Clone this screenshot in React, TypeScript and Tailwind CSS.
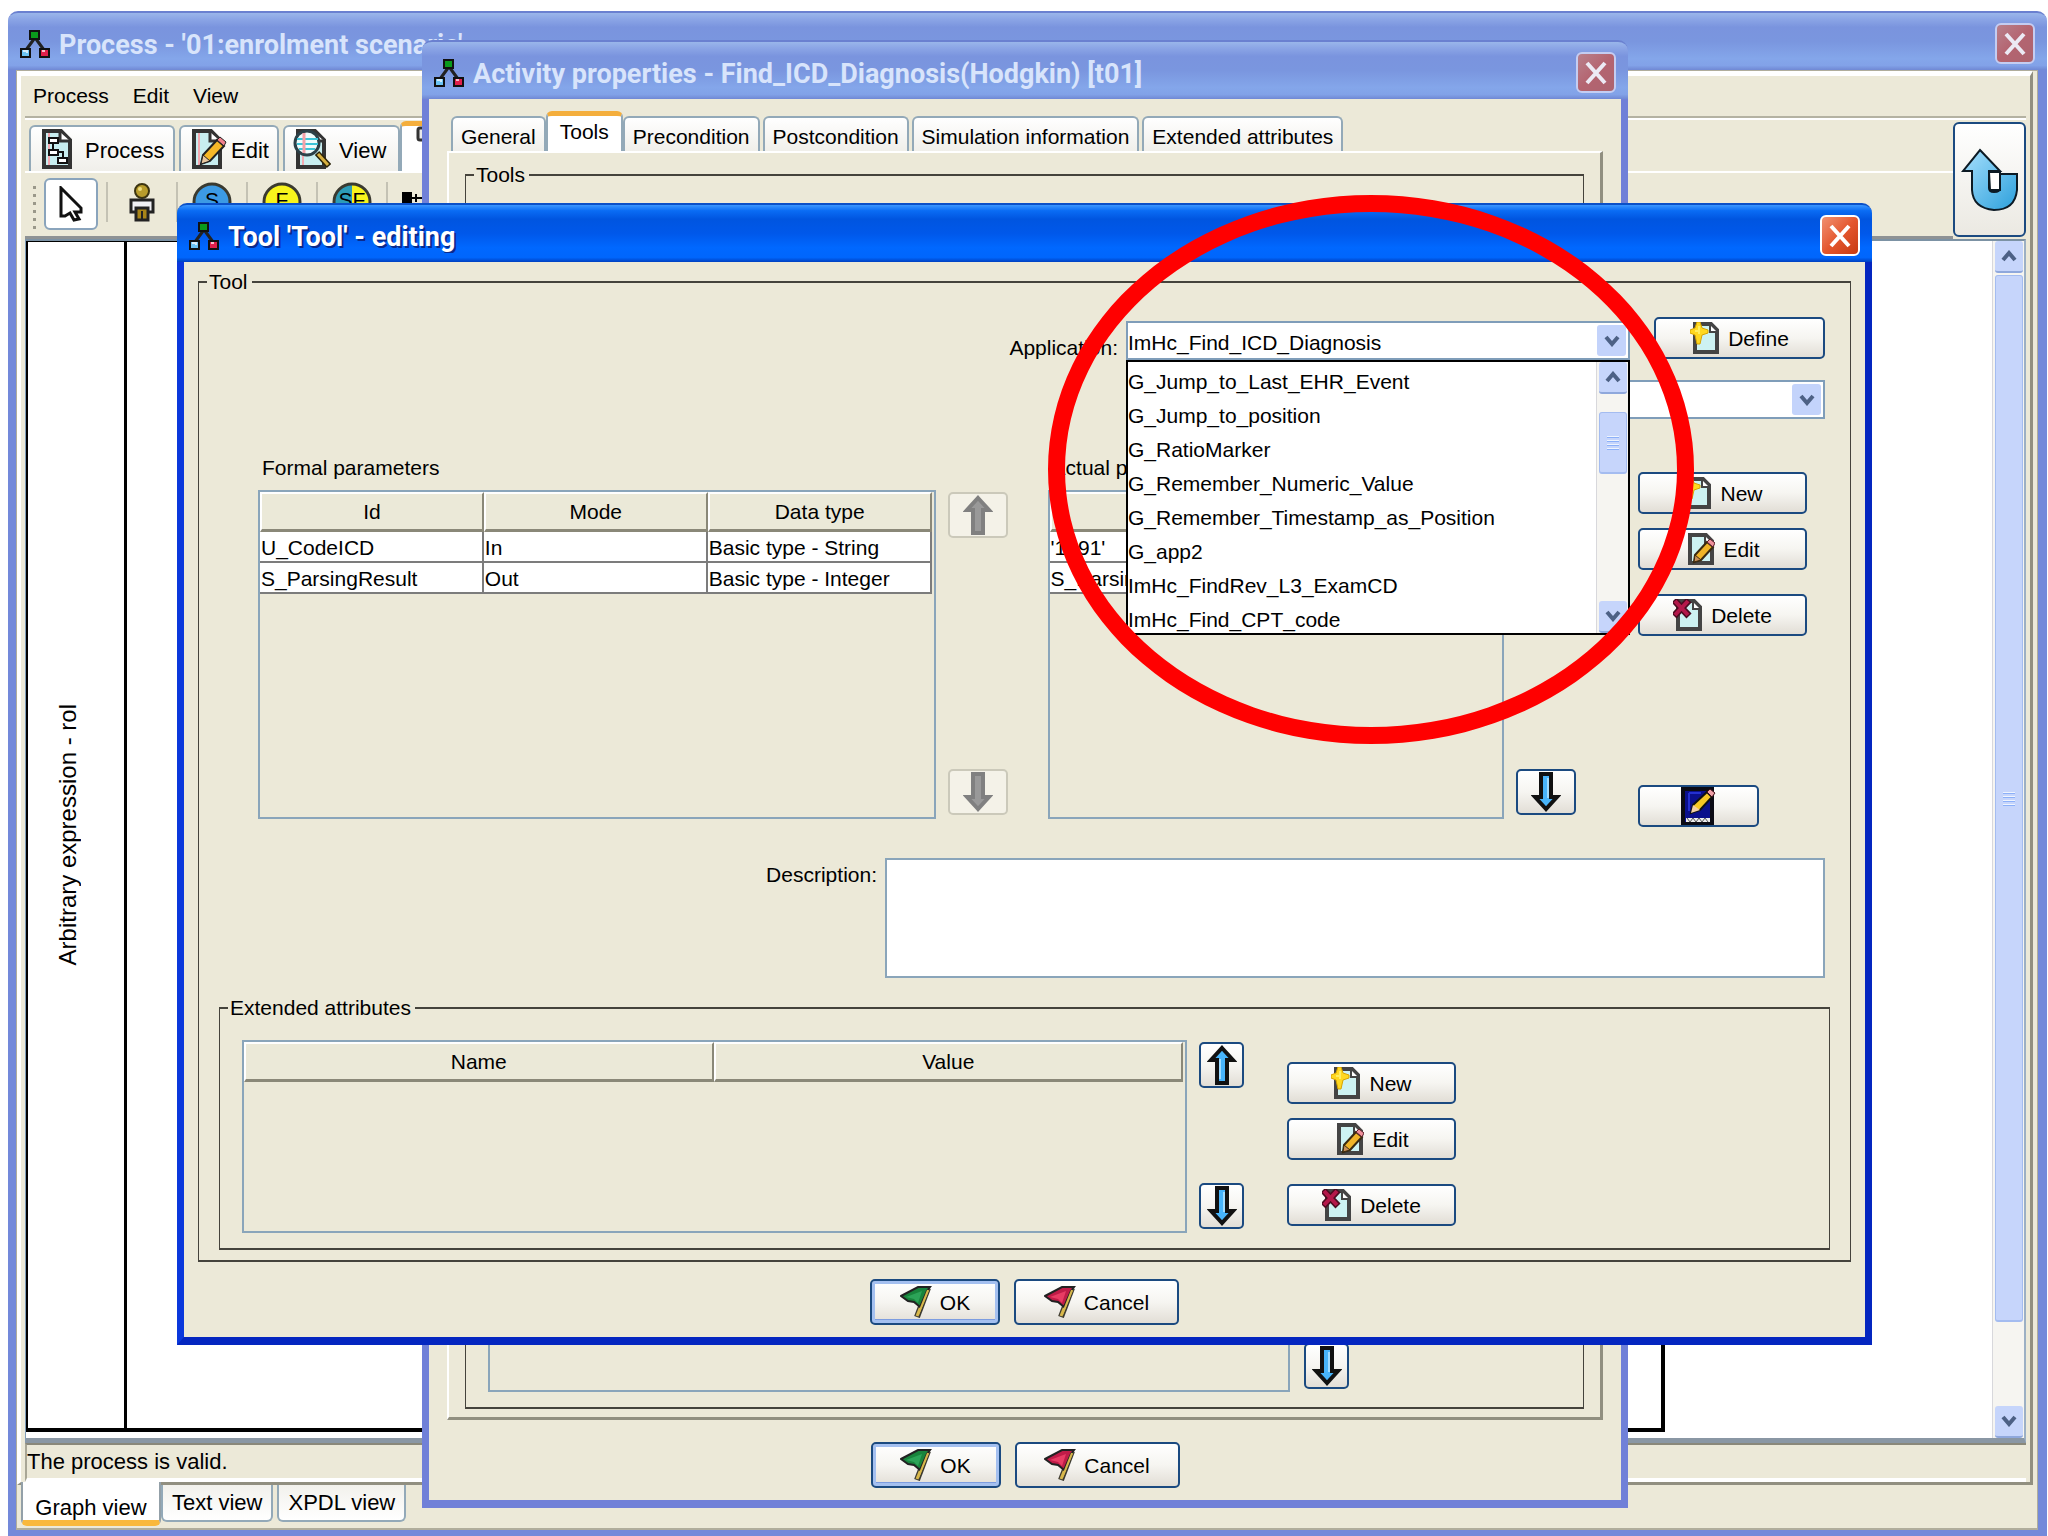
import React, { useState } from 'react';
import clsx from 'clsx';

const applications = [
  'G_Jump_to_Last_EHR_Event',
  'G_Jump_to_position',
  'G_RatioMarker',
  'G_Remember_Numeric_Value',
  'G_Remember_Timestamp_as_Position',
  'G_app2',
  'ImHc_FindRev_L3_ExamCD',
  'ImHc_Find_CPT_code'
];

const formalParameters = [
  { id: 'U_CodeICD', mode: 'In', type: 'Basic type - String' },
  { id: 'S_ParsingResult', mode: 'Out', type: 'Basic type - Integer' }
];

const actualParameters = ["'1291'", 'S_ParsingResult'];

const activityTabs = [
  'General',
  'Tools',
  'Precondition',
  'Postcondition',
  'Simulation information',
  'Extended attributes'
];

const viewTabs = ['Graph view', 'Text view', 'XPDL view'];

/* ---------- icons ---------- */

const AppIcon = () => (
  <svg className="h-7 w-8 shrink-0" viewBox="0 0 32 28" aria-hidden="true">
    <path d="M15 9 L7 20 M17 9 L25 20" stroke="#222" strokeWidth="3" fill="none" />
    <rect x="11" y="1" width="9" height="8" fill="#0a9a1c" stroke="#111" strokeWidth="2" />
    <rect x="2" y="19" width="9" height="8" fill="#6cc4f4" stroke="#111" strokeWidth="2" />
    <rect x="21" y="19" width="9" height="8" fill="#e0204c" stroke="#111" strokeWidth="2" />
    <path d="M4 21 h4 v2 M23 21 h3" stroke="#fff" strokeWidth="2" fill="none" opacity="0.7" />
  </svg>
);

const SmallPage = ({ children }: { children?: React.ReactNode }) => (
  <svg className="h-8 w-[30px] shrink-0" viewBox="0 0 30 32" aria-hidden="true">
    <path d="M5 2 H21 L27 8 V30 H5 Z" fill="#cdf2f2" stroke="#444" strokeWidth="4" />
    <path d="M20 3 V10 H27" fill="#fff" stroke="#444" strokeWidth="2" />
    {children}
  </svg>
);

const NewIcon = () => (
  <SmallPage>
    <path
      d="M7 0 H10 L12 6 L18 8 V11 L12 13 L10 22 H7 L5 13 L0 11 V8 L5 6 Z"
      fill="#ffd820"
      stroke="#d8a400"
      strokeWidth="1"
    />
    <path d="M9 4 V12 M5 9 H9" stroke="#ffee60" strokeWidth="2" />
  </SmallPage>
);

const EditIcon = () => (
  <SmallPage>
    <path d="M9 29 L10 22 L22 9 L28 14 L16 27 Z" fill="#f0b428" stroke="#3a2a10" strokeWidth="2" />
    <path d="M9 29 L10 22 L16 27 Z" fill="#c89058" stroke="#3a2a10" strokeWidth="1" />
    <path d="M22 9 L25 6 L30 10 L28 14 Z" fill="#f0909c" stroke="#5a2028" strokeWidth="1" />
  </SmallPage>
);

const DeleteIcon = () => (
  <SmallPage>
    <path d="M1 1 L16 17 M16 1 L1 17" stroke="#4a0c20" strokeWidth="7" />
    <path d="M2 2 L15 16 M15 2 L2 16" stroke="#b4184a" strokeWidth="4" />
  </SmallPage>
);

const FlagIcon = ({ light, dark }: { light: string; dark: string }) => (
  <svg className="h-8 w-8 shrink-0" viewBox="0 0 32 32" aria-hidden="true">
    <path d="M28 2 L17 31" stroke="#3c3a30" strokeWidth="6" />
    <path d="M28 3 L17 30" stroke="#d8b84c" strokeWidth="3" />
    <path
      d="M1 10 L18 1 L30 1 L27 5 L20 21 L14 16 L8 15 Z"
      fill={light}
      stroke="#222"
      strokeWidth="2"
    />
    <path d="M6 11 L22 5 L18 17 L14 13 Z" fill={dark} />
    <path d="M28 4 L18 29" stroke="#d8b84c" strokeWidth="2" />
  </svg>
);

const ArrowIcon = ({ down, disabled }: { down?: boolean; disabled?: boolean }) => (
  <svg
    className={clsx('h-10 w-[30px] shrink-0', down && 'rotate-180')}
    viewBox="0 0 30 40"
    aria-hidden="true"
  >
    <path
      d="M15 3 L26 15 H20 V38 H10 V15 H4 Z"
      fill={disabled ? '#999' : '#48b4fa'}
      stroke={disabled ? '#808080' : '#111'}
      strokeWidth="4"
    />
    {!disabled && <path d="M13 14 V34" stroke="#a0dcff" strokeWidth="2" />}
  </svg>
);

const NotepadIcon = () => (
  <svg className="h-[38px] w-9 shrink-0" viewBox="0 0 36 38" aria-hidden="true">
    <rect x="2" y="2" width="29" height="35" fill="#0a0f8c" stroke="#0b0b14" strokeWidth="4" />
    <path d="M8 6 H20 M8 6 V24" stroke="#2430d0" strokeWidth="2" />
    <rect x="5" y="31" width="24" height="4" fill="#eee" />
    <path d="M6 31 l3 4 l3 -4 l3 4 l3 -4 l3 4 l3 -4 l3 4" stroke="#555" strokeWidth="1" fill="none" />
    <path d="M10 26 L12 18 L26 5 L31 10 L19 23 Z" fill="#f6c824" stroke="#111" strokeWidth="2" />
    <path d="M10 26 L12 18 L19 23 Z" fill="#f4d0a4" />
    <path d="M26 5 L29 2 L34 6 L31 10 Z" fill="#f0a0a8" stroke="#401018" strokeWidth="1" />
  </svg>
);

const LargePage = ({ children }: { children?: React.ReactNode }) => (
  <svg className="h-10 w-[38px] shrink-0" viewBox="0 0 38 40" aria-hidden="true">
    <path d="M5 2 H22 L31 11 V38 H5 Z" fill="#c8eef0" stroke="#333" strokeWidth="4" />
    <path d="M10 4 V36" stroke="#f4a8b0" strokeWidth="2" />
    <path d="M21 3 V12 H31" fill="#fff" stroke="#333" strokeWidth="3" />
    {children}
  </svg>
);

const ProcessIcon = () => (
  <LargePage>
    <path d="M14 14 V23 M18 23 H24 V29" stroke="#111" strokeWidth="2" fill="none" />
    <rect x="10" y="9" width="9" height="5" fill="#fff" stroke="#111" strokeWidth="2" />
    <rect x="10" y="21" width="9" height="5" fill="#fff" stroke="#111" strokeWidth="2" />
    <rect x="19" y="29" width="9" height="5" fill="#fff" stroke="#111" strokeWidth="2" />
  </LargePage>
);

const LargeEditIcon = () => (
  <LargePage>
    <path d="M12 35 L14 26 L28 11 L35 17 L21 32 Z" fill="#f6b828" stroke="#222" strokeWidth="2" />
    <path d="M12 35 L14 26 L21 32 Z" fill="#e8c8a0" stroke="#222" strokeWidth="1" />
    <path d="M28 11 L31 8 L37 13 L35 17 Z" fill="#f0808c" stroke="#222" strokeWidth="1" />
  </LargePage>
);

const LargeViewIcon = () => (
  <LargePage>
    <path d="M24 24 L36 37" stroke="#2c2408" strokeWidth="6" />
    <path d="M25 25 L35 36" stroke="#d8b040" strokeWidth="3" />
    <circle cx="14" cy="14" r="12" fill="#eefcfc" stroke="#2c4048" strokeWidth="3" />
    <path d="M4 10 H25 M4 15 H25 M6 20 H22" stroke="#3cc4d8" strokeWidth="2" />
    <path d="M11 4 V24" stroke="#f4a0a8" strokeWidth="3" />
  </LargePage>
);

const ReturnIcon = () => (
  <svg className="h-16 w-[58px]" viewBox="0 0 58 64" aria-hidden="true">
    <defs>
      <linearGradient id="ret" x1="0" y1="0" x2="1" y2="1">
        <stop offset="0" stopColor="#a8e0fc" />
        <stop offset="1" stopColor="#2ca0dc" />
      </linearGradient>
    </defs>
    <path
      d="M19 2 L39 23 H28 V40 Q28 44 33 44 Q39 44 39 40 V26 H56 V42 Q54 62 33 62 Q12 60 11 42 V23 H2 Z"
      fill="url(#ret)"
      stroke="#0c1a24"
      strokeWidth="2"
    />
    <path d="M28 24 H39 V42 H29 Z" fill="#fff" stroke="#0c1a24" strokeWidth="2" />
  </svg>
);

const PointerIcon = () => (
  <svg className="h-9 w-6" viewBox="0 0 24 36" aria-hidden="true">
    <path
      d="M2 2 L22 22 V26 H16 L20 33 L15 34 L11 27 L6 30 H2 Z"
      fill="#fff"
      stroke="#111"
      strokeWidth="3"
    />
  </svg>
);

const PersonIcon = () => (
  <svg className="h-10 w-7" viewBox="0 0 28 40" aria-hidden="true">
    <circle cx="14" cy="9" r="7" fill="#b89c2c" stroke="#3c3410" strokeWidth="2" />
    <circle cx="12" cy="7" r="2" fill="#ecdc80" />
    <path d="M3 18 H25 V30 H3 Z" fill="#f0f0f4" stroke="#222" strokeWidth="3" />
    <path d="M8 26 H20 V38 H8 Z" fill="#a88418" stroke="#222" strokeWidth="3" />
    <path d="M14 29 V38" stroke="#222" strokeWidth="2" />
  </svg>
);

const CircleIcon = ({ label, left, right }: { label: string; left: string; right: string }) => (
  <svg className="h-10 w-10" viewBox="0 0 40 40" aria-hidden="true">
    <circle cx="20" cy="20" r="18" fill={left} />
    <path d="M20 2 A18 18 0 0 1 20 38 Z" fill={right} />
    <circle cx="20" cy="20" r="18" fill="none" stroke="#3a3a30" strokeWidth="3" />
    <text x="20" y="25" textAnchor="middle" fontSize="21" fontFamily="Liberation Sans, sans-serif">
      {label}
    </text>
  </svg>
);

const FlowIcon = () => (
  <svg className="h-10 w-10" viewBox="0 0 40 40" aria-hidden="true">
    <rect x="0" y="10" width="10" height="13" fill="#000" />
    <path d="M10 16 H22 M14 12 V20" stroke="#000" strokeWidth="2" />
    <rect x="20" y="5" width="12" height="20" fill="#000" />
  </svg>
);

const Chevron = ({ up }: { up?: boolean }) => (
  <svg className={clsx('h-3 w-4', up && 'rotate-180')} viewBox="0 0 16 12" aria-hidden="true">
    <path d="M2 2 L8 9 L14 2" fill="none" stroke="#4d6185" strokeWidth="4" />
  </svg>
);

/* ---------- shared controls ---------- */

const CloseButton = ({ active }: { active?: boolean }) => (
  <button
    aria-label="Close"
    className={clsx(
      'flex h-[41px] w-10 items-center justify-center rounded-md border-2',
      active
        ? 'border-white bg-linear-to-br from-[#f09070] via-[#e4572e] to-[#c83a10]'
        : 'border-[#c4cdf2] bg-linear-to-br from-[#b8808c] via-[#b46470] to-[#ac6470]'
    )}
  >
    <svg className="h-6 w-6" viewBox="0 0 24 24" aria-hidden="true">
      <path d="M3 2 L21 22 M21 2 L3 22" stroke={active ? '#fff' : '#eceaf4'} strokeWidth="4" />
    </svg>
  </button>
);

const TitleBar = ({ title, active }: { title: string; active?: boolean }) => (
  <header
    className={clsx(
      'flex h-[59px] shrink-0 items-center rounded-t-[10px] border-t-2 pt-1 pr-3 pl-[11px]',
      active
        ? 'border-[#0a50c8] bg-[linear-gradient(#3a96ff,#0a6cf4_10%,#0055e0_25%,#0058ea_50%,#0068ff_75%,#0066fc_92%,#0040c0)]'
        : 'border-[#6a80d0] bg-[linear-gradient(#9ab6ea,#8ca6e6_10%,#7a94de_25%,#7a96df_50%,#84a6ea_80%,#82a2e8_92%,#7088d4)]'
    )}
  >
    <AppIcon />
    <h1
      className={clsx(
        'ml-2 flex-1 truncate pt-0.5 font-[Roboto,sans-serif] text-[27px] leading-8 font-bold',
        active ? 'text-white [text-shadow:2px_2px_0_#0a2a8c]' : 'text-[#d8e4fb]'
      )}
    >
      {title}
    </h1>
    <CloseButton active={active} />
  </header>
);

interface XpButtonProps {
  label?: string;
  name?: string;
  icon: React.ReactNode;
  className: string;
  disabled?: boolean;
  focused?: boolean;
}

const XpButton: React.FC<XpButtonProps> = ({ label, name, icon, className, disabled, focused }) => (
  <button
    aria-label={name}
    disabled={disabled}
    className={clsx(
      'flex shrink-0 items-center justify-center gap-2 rounded-[5px] border-2',
      disabled
        ? 'border-[#cbc9ba] bg-[#f4f2e8]'
        : 'border-[#1b4a80] bg-linear-to-b from-white via-[#f6f5f1] to-[#e2ded6]',
      focused && 'shadow-[inset_0_0_0_3px_#a4c0f0,inset_0_-4px_0_0_#7c9ce0]',
      className
    )}
  >
    {icon}
    {label && <span className="pt-0.5">{label}</span>}
  </button>
);

const OkCancel = () => (
  <div className="flex justify-center gap-[14px]">
    <XpButton
      label="OK"
      icon={<FlagIcon light="#18843c" dark="#2ca458" />}
      className="h-[46px] w-[130px]"
      focused
    />
    <XpButton
      label="Cancel"
      icon={<FlagIcon light="#c01c48" dark="#e83c64" />}
      className="h-[46px] w-[165px]"
    />
  </div>
);

const GroupBox = ({
  title,
  className,
  children
}: {
  title: string;
  className?: string;
  children: React.ReactNode;
}) => (
  <fieldset className={clsx('min-w-0 border-x border-y-2 border-[#45433c]', className)}>
    <legend className="ml-2 pr-1 pl-0.5 leading-6">{title}</legend>
    {children}
  </fieldset>
);

const HeaderCell = ({ children }: { children?: React.ReactNode }) => (
  <th
    scope="col"
    className="h-10 border-t-2 border-r-2 border-b-[3px] border-l-2 border-t-white border-r-[#8a8878] border-b-[#8a8878] border-l-white bg-[#ebe9d8] text-center font-normal"
  >
    {children}
  </th>
);

const Cell = ({ children }: { children: React.ReactNode }) => (
  <td className="h-[31px] truncate border-r-2 border-b-2 border-[#7c7c7c] bg-white pt-[3px] pl-px leading-[26px]">
    {children}
  </td>
);

const ScrollBar = ({ className, children }: { className?: string; children: React.ReactNode }) => (
  <div
    className={clsx(
      'flex w-8 shrink-0 flex-col items-center border-l border-[#d8d8dc] bg-[#f6f5f1]',
      className
    )}
  >
    <button
      aria-label="Scroll up"
      className="flex h-8 w-7 shrink-0 items-center justify-center rounded-[3px] border-b-2 border-[#8fa8dc] bg-[#c6d5fb]"
    >
      <Chevron up />
    </button>
    {children}
    <button
      aria-label="Scroll down"
      className="flex h-8 w-7 shrink-0 items-center justify-center rounded-[3px] border-b-2 border-[#8fa8dc] bg-[#c6d5fb]"
    >
      <Chevron />
    </button>
  </div>
);

const Grip = () => (
  <span className="flex flex-col gap-[3px]">
    {[0, 1, 2, 3].map((i) => (
      <span key={i} className="h-px w-3 bg-[#eef4fe] shadow-[0_1px_0_#8cb0f8]" />
    ))}
  </span>
);

const comboClass =
  'h-[39px] w-full appearance-none border-2 border-[#7f9db9] bg-white pt-1 text-[21px] leading-8';

const ComboArrow = () => (
  <span className="pointer-events-none absolute top-1 right-1 bottom-1 flex w-[29px] items-center justify-center rounded-[3px] bg-[#c3d3fb]">
    <Chevron />
  </span>
);

/* ---------- process window ---------- */

const ToolbarItem = ({ children }: { children: React.ReactNode }) => (
  <span className="flex h-10 w-[70px] shrink-0 items-start justify-center border-l-2 border-[#c4c2b4]">
    {children}
  </span>
);

const toolTabClass =
  'flex h-[46px] shrink-0 items-center rounded-t-md border-2 border-b-0 border-[#93a9b8] bg-linear-to-b from-white to-[#f0efea] pl-2 text-[22px]';

const ProcessWindow = () => (
  <section className="flex h-full flex-col">
    <TitleBar title="Process - '01:enrolment scenario'" />
    <div className="flex min-h-0 flex-1 flex-col border-r-[9px] border-b-[6px] border-l-8 border-[#7389da] bg-[#ece9d8]">
      <div className="flex min-h-0 flex-1 flex-col border-x border-t border-b-2 border-[#b0ad9c]">
        <div className="mr-1 flex min-h-0 flex-1 flex-col border-t-[5px] border-r-[3px] border-b-[3px] border-l-4 border-t-white border-r-[#918f80] border-b-[#918f80] border-l-white px-1">
          <nav className="flex h-[42px] shrink-0 items-center gap-6 border-b-2 border-[#b4b2a2] pl-2 shadow-[0_2px_0_#fff]">
            <button>Process</button>
            <button>Edit</button>
            <button>View</button>
          </nav>

          <div className="flex h-[121px] shrink-0">
            <div className="flex min-w-0 flex-1 flex-col">
              <div className="flex h-[53px] items-end gap-1 overflow-hidden pl-1" role="tablist">
                <button role="tab" className={clsx(toolTabClass, 'w-[146px] gap-2')}>
                  <ProcessIcon />
                  <span className="pt-1">Process</span>
                </button>
                <button role="tab" className={clsx(toolTabClass, 'w-[100px] gap-1')}>
                  <LargeEditIcon />
                  <span className="pt-1">Edit</span>
                </button>
                <button role="tab" className={clsx(toolTabClass, 'w-[117px] gap-2')}>
                  <LargeViewIcon />
                  <span className="pt-1">View</span>
                </button>
                <button
                  role="tab"
                  aria-label="Insert"
                  className="-ml-1 flex h-[50px] w-[130px] items-start rounded-t-md border-x-2 border-t-[5px] border-x-[#93a9b8] border-t-[#f4ae3c] bg-white pl-3"
                >
                  <svg className="h-4 w-8" viewBox="0 0 32 16" aria-hidden="true">
                    <rect x="4" y="2" width="20" height="12" rx="2" fill="#e8e8e8" stroke="#333" strokeWidth="3" />
                  </svg>
                </button>
              </div>
              <div className="flex flex-1 border-t-2 border-b-[3px] border-t-white border-b-[#8e9294] pt-[5px] pl-2">
                <span className="mt-2 flex flex-col gap-[5px]">
                  {[0, 1, 2, 3, 4, 5].map((i) => (
                    <span key={i} className="h-[3px] w-[3px] bg-[#9a988a]" />
                  ))}
                </span>
                <button
                  aria-label="Select"
                  className="mr-2 ml-2 flex h-[52px] w-[54px] shrink-0 items-center justify-center rounded-md border-2 border-[#8aa4bc] bg-white"
                >
                  <PointerIcon />
                </button>
                <div className="flex pt-1">
                  <ToolbarItem>
                    <PersonIcon />
                  </ToolbarItem>
                  <ToolbarItem>
                    <CircleIcon label="S" left="#3c9ae4" right="#3c9ae4" />
                  </ToolbarItem>
                  <ToolbarItem>
                    <CircleIcon label="F" left="#f8f41c" right="#f8f41c" />
                  </ToolbarItem>
                  <ToolbarItem>
                    <CircleIcon label="SF" left="#2c9cb8" right="#f8f41c" />
                  </ToolbarItem>
                  <ToolbarItem>
                    <FlowIcon />
                  </ToolbarItem>
                </div>
              </div>
            </div>
            <button
              aria-label="Up one level"
              className="mt-1 flex h-[115px] w-[73px] shrink-0 items-center justify-center rounded-md border-2 border-[#1b4a80] bg-linear-to-b from-white to-[#ebe9e2]"
            >
              <ReturnIcon />
            </button>
          </div>

          <div className="flex min-h-0 flex-1 border-t-2 border-r-2 border-b-[5px] border-l border-t-[#7c92a4] border-r-[#9cb0c4] border-b-[#8a97a4] border-l-[#7f9db9] bg-white">
            <div className="mr-[327px] mb-[6px] flex flex-1 border-t border-r-4 border-b-4 border-l-2 border-black">
              <div className="flex w-[99px] items-center justify-center border-r-[3px] border-black pr-4">
                <span className="rotate-180 text-[24px] leading-8 whitespace-nowrap [writing-mode:vertical-rl]">
                  Arbitrary expression - rol
                </span>
              </div>
            </div>
            <ScrollBar>
              <span className="my-0.5 flex min-h-0 w-7 flex-[1046] items-center justify-center rounded-[3px] border border-b-2 border-[#a4bcf0] bg-[#c6d5fb]">
                <Grip />
              </span>
              <span className="flex-[82]" />
            </ScrollBar>
          </div>

          <p className="h-[39px] shrink-0 border-t-2 border-b-4 border-l-2 border-t-[#8a887a] border-b-white border-l-[#a8a696] text-[22px] leading-[34px]">
            The process is valid.
          </p>
        </div>

        <div className="-mt-[3px] flex h-[46px] shrink-0 items-start gap-1 pl-1" role="tablist">
          {viewTabs.map((tab, i) => (
            <button
              key={tab}
              role="tab"
              className={clsx(
                'rounded-b-md text-[22px]',
                i === 0
                  ? '-mr-1 h-[44px] w-[140px] border-x-2 border-b-[6px] border-x-[#93a0a8] border-b-[#f9b83c] bg-white pt-2 leading-9'
                  : 'mt-[3px] h-[37px] border-2 border-t-0 border-[#93a9b8] bg-linear-to-b from-[#f2f1ec] to-white px-[9px] leading-9'
              )}
            >
              {tab}
            </button>
          ))}
        </div>
      </div>
    </div>
  </section>
);

/* ---------- activity properties window ---------- */

const ActivityWindow = () => (
  <section className="absolute top-[40px] right-[420px] bottom-[28px] left-[422px] flex flex-col">
    <TitleBar title="Activity properties - Find_ICD_Diagnosis(Hodgkin) [t01]" />
    <div className="flex min-h-0 flex-1 flex-col border-x-[7px] border-b-8 border-[#7080d8] bg-[#ece9d8] pt-3 pb-3">
      <div className="mx-[18px] flex h-10 shrink-0 items-end gap-[3px] pl-1" role="tablist">
        {activityTabs.map((tab) => (
          <button
            key={tab}
            role="tab"
            className={clsx(
              'rounded-t-md border-x-2',
              tab === 'Tools'
                ? '-mx-[3px] h-10 border-t-[5px] border-x-[#93a9b8] border-t-[#f4ae3c] bg-white px-3 pb-1'
                : 'h-[35px] border-t-2 border-[#93a9b8] bg-linear-to-b from-white to-[#f0efea] px-2 pt-1'
            )}
          >
            {tab}
          </button>
        ))}
      </div>
      <div className="mx-[18px] mb-[22px] flex min-h-0 flex-1 flex-col border-t-2 border-r-[3px] border-b-[3px] border-l-2 border-t-white border-r-[#918f80] border-b-[#918f80] border-l-white px-4 pt-[10px] pb-2">
        <GroupBox title="Tools" className="flex min-h-0 flex-1 flex-col">
          <div className="flex h-full items-end pt-12 pr-[234px] pb-[15px] pl-[22px]">
            <div className="h-full flex-1 border-2 border-[#8aa5ba]" />
            <div className="ml-[14px] pb-[3px]">
              <XpButton name="Move down" icon={<ArrowIcon down />} className="h-[46px] w-[45px]" />
            </div>
          </div>
        </GroupBox>
      </div>
      <OkCancel />
    </div>
  </section>
);

/* ---------- tool window ---------- */

const ToolWindow = () => {
  const [application, setApplication] = useState('ImHc_Find_ICD_Diagnosis');
  const [description, setDescription] = useState('');

  return (
    <section className="absolute top-[203px] right-[176px] left-[177px]">
      <TitleBar title="Tool 'Tool' - editing" active />
      <div className="border-x-[7px] border-b-8 border-[#0a38dc] border-r-[#0426c0] border-b-[#0426c0] bg-[#ece9d8] px-[14px] pt-2 pb-3">
        <GroupBox title="Tool" className="pb-[10px]">
          <div className="flex flex-col items-end pt-[23px] pr-[25px]">
            <div className="flex h-[43px] items-end">
              <label htmlFor="application" className="mr-2 leading-6">
                Application:
              </label>
              <div className="relative w-[504px]">
                <select
                  id="application"
                  value={application}
                  onChange={(e) => setApplication(e.target.value)}
                  className={comboClass}
                >
                  <option>ImHc_Find_ICD_Diagnosis</option>
                  {applications.map((app) => (
                    <option key={app}>{app}</option>
                  ))}
                </select>
                <ComboArrow />
                <div className="absolute top-full left-0 z-10 flex h-[275px] w-full overflow-hidden border-2 border-black bg-white">
                  <ul className="flex-1 pt-[3px]" role="listbox" aria-label="Applications">
                    {applications.map((app) => (
                      <li key={app} role="option" className="leading-[34px]">
                        {app}
                      </li>
                    ))}
                  </ul>
                  <ScrollBar>
                    <span className="mt-[18px] mb-auto flex h-[62px] w-7 items-center justify-center rounded-[3px] border border-b-2 border-[#a4bcf0] bg-[#c6d5fb]">
                      <Grip />
                    </span>
                  </ScrollBar>
                </div>
              </div>
              <div className="ml-6 self-start">
                <XpButton label="Define" icon={<NewIcon />} className="h-[42px] w-[171px]" />
              </div>
            </div>
            <div className="relative mt-5 w-[699px]">
              <select aria-label="Performer" className={comboClass} />
              <ComboArrow />
            </div>
          </div>

          <div className="mt-[37px] flex items-start pr-[43px] pl-[59px]">
            <div className="flex-[677]">
              <p className="mb-[10px] pl-1 leading-6">Formal parameters</p>
              <div className="h-[329px] border-2 border-[#8aa5ba] pr-0.5">
                <table className="w-full table-fixed border-separate border-spacing-0">
                  <thead>
                    <tr>
                      <HeaderCell>Id</HeaderCell>
                      <HeaderCell>Mode</HeaderCell>
                      <HeaderCell>Data type</HeaderCell>
                    </tr>
                  </thead>
                  <tbody>
                    {formalParameters.map((param) => (
                      <tr key={param.id}>
                        <Cell>{param.id}</Cell>
                        <Cell>{param.mode}</Cell>
                        <Cell>{param.type}</Cell>
                      </tr>
                    ))}
                  </tbody>
                </table>
              </div>
            </div>
            <div className="mt-9 ml-3 flex h-[323px] flex-col justify-between">
              <XpButton name="Move up" icon={<ArrowIcon disabled />} className="h-[46px] w-[60px]" disabled />
              <XpButton name="Move down" icon={<ArrowIcon down disabled />} className="h-[46px] w-[60px]" disabled />
            </div>

            <div className="ml-10 flex-[456]">
              <p className="mb-[10px] pl-1 leading-6">Actual parameters</p>
              <div className="h-[329px] border-2 border-[#8aa5ba] pr-0.5">
                <table className="w-full table-fixed border-separate border-spacing-0" aria-label="Actual parameters">
                  <thead>
                    <tr>
                      <HeaderCell />
                    </tr>
                  </thead>
                  <tbody>
                    {actualParameters.map((param) => (
                      <tr key={param}>
                        <Cell>{param}</Cell>
                      </tr>
                    ))}
                  </tbody>
                </table>
              </div>
            </div>
            <div className="mt-9 ml-3 flex h-[323px] flex-col justify-between">
              <XpButton name="Move up" icon={<ArrowIcon />} className="h-[46px] w-[60px]" />
              <XpButton name="Move down" icon={<ArrowIcon down />} className="h-[46px] w-[60px]" />
            </div>
            <div className="mt-4 ml-[62px] flex w-[169px] flex-col">
              <XpButton label="New" icon={<NewIcon />} className="h-[42px]" />
              <XpButton label="Edit" icon={<EditIcon />} className="mt-[14px] h-[42px]" />
              <XpButton label="Delete" icon={<DeleteIcon />} className="mt-6 h-[42px]" />
              <XpButton name="Edit expression" icon={<NotepadIcon />} className="mt-[149px] h-[42px] w-[121px]" />
            </div>
          </div>

          <div className="mt-[31px] flex pr-[25px]">
            <label htmlFor="description" className="w-[678px] pt-[5px] text-right leading-6">
              Description:
            </label>
            <textarea
              id="description"
              value={description}
              onChange={(e) => setDescription(e.target.value)}
              className="ml-2 h-[120px] flex-1 resize-none border-2 border-[#8aa5ba] bg-white"
            />
          </div>

          <GroupBox title="Extended attributes" className="mx-5 mt-[18px] pb-[15px]">
            <div className="flex items-start pt-5 pr-[373px] pl-[22px]">
              <div className="h-[193px] flex-1 border-2 border-[#8aa5ba] pr-0.5">
                <table className="w-full table-fixed border-separate border-spacing-0">
                  <thead>
                    <tr>
                      <HeaderCell>Name</HeaderCell>
                      <HeaderCell>Value</HeaderCell>
                    </tr>
                  </thead>
                </table>
              </div>
              <div className="mt-0.5 ml-3 flex h-[187px] flex-col justify-between">
                <XpButton name="Move up" icon={<ArrowIcon />} className="h-[46px] w-[45px]" />
                <XpButton name="Move down" icon={<ArrowIcon down />} className="h-[46px] w-[45px]" />
              </div>
              <div className="mt-[22px] ml-[43px] flex w-[169px] flex-col">
                <XpButton label="New" icon={<NewIcon />} className="h-[42px]" />
                <XpButton label="Edit" icon={<EditIcon />} className="mt-[14px] h-[42px]" />
                <XpButton label="Delete" icon={<DeleteIcon />} className="mt-6 h-[42px]" />
              </div>
            </div>
          </GroupBox>
        </GroupBox>

        <div className="mt-[17px]">
          <OkCancel />
        </div>
      </div>

      {/* highlight ring around the application list */}
      <div className="pointer-events-none absolute -top-2 right-[178px] z-20 h-[549px] w-[646px] rounded-[50%] border-[17px] border-[#ff0000]" />
    </section>
  );
};

const App: React.FC = () => (
  <main className="relative h-screen overflow-hidden bg-white pt-[11px] pr-px pl-2 font-['Liberation_Sans',Arial,sans-serif] text-[21px] leading-7 text-black">
    <ProcessWindow />
    <ActivityWindow />
    <ToolWindow />
  </main>
);

export default App;
